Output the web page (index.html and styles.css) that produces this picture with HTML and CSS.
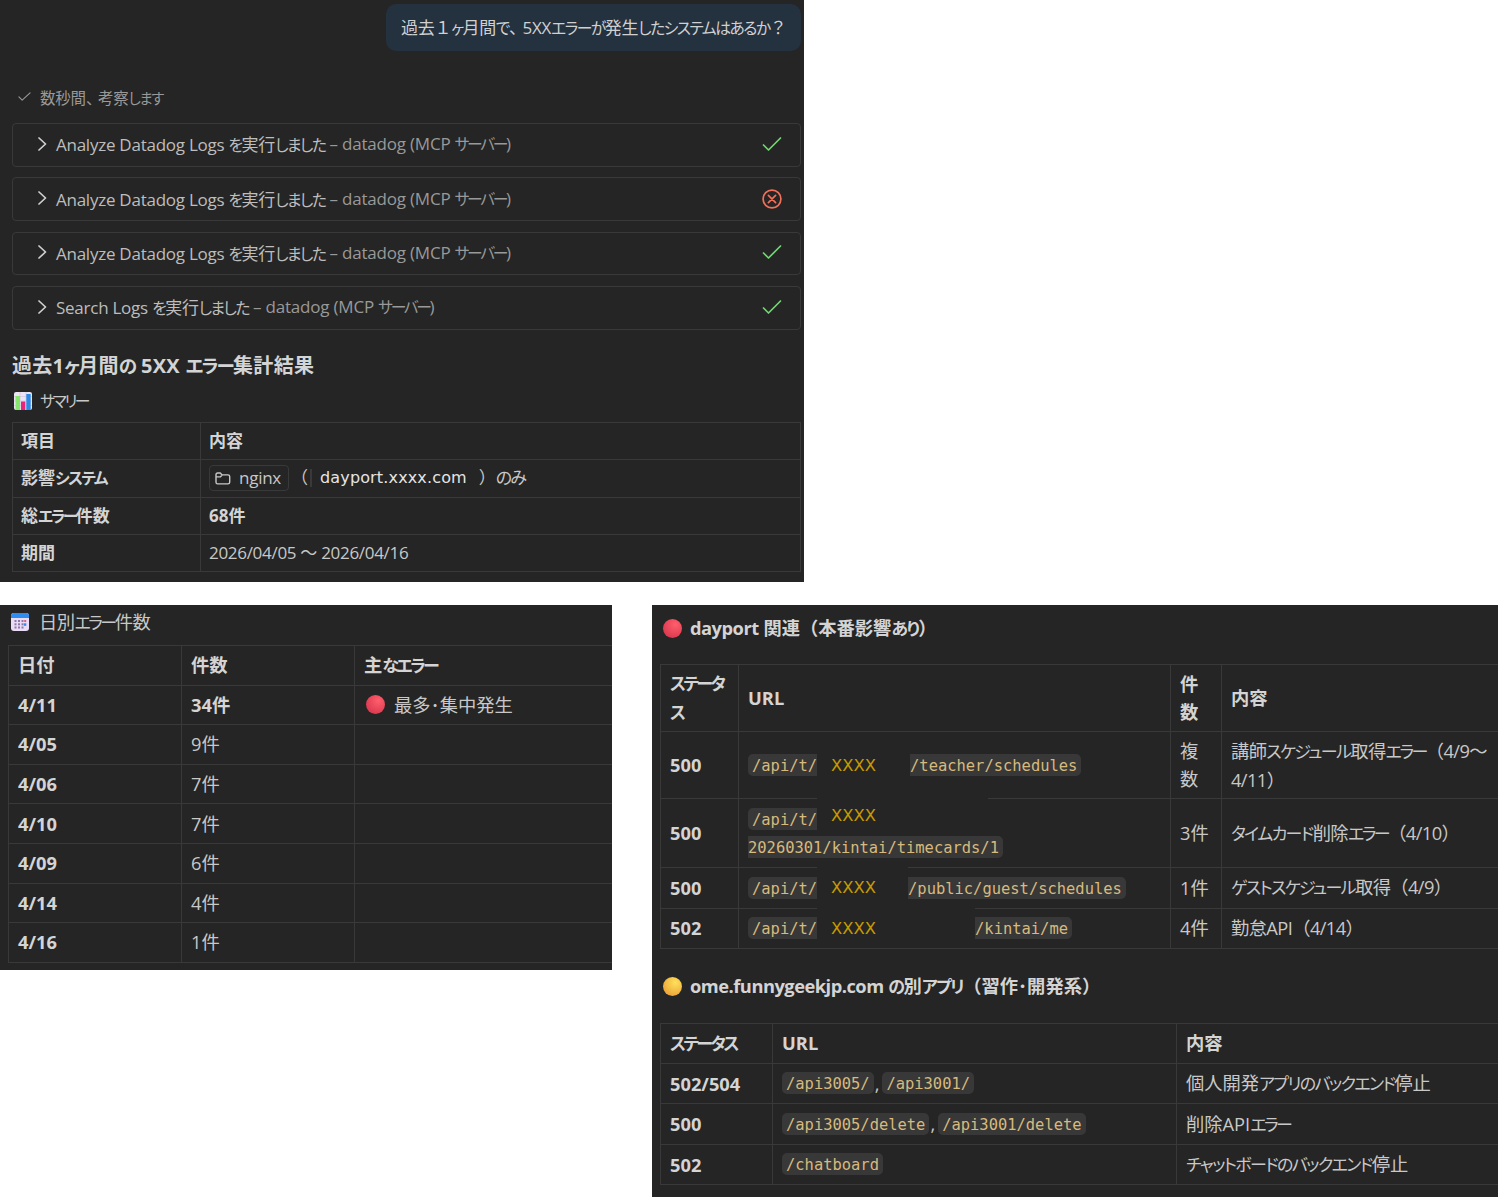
FILE: index.html
```html
<!DOCTYPE html>
<html lang="ja">
<head>
    <meta charset="UTF-8">
    <meta name="viewport" content="width=device-width, initial-scale=1.0">
    <title>過去1ヶ月間の 5XX エラー集計結果</title>
    <link rel="stylesheet" href="styles.css">
</head>
<body>
    <section class="panel chat">
        <div class="question">過去１<span class="k">ヶ</span>月間<span class="k">で</span><span class="touten">、</span>5XX<span class="k">エラーが</span>発生<span class="k">したシステムはあるか</span>？</div>

        <div class="thinking">
            <svg class="think-check" viewBox="0 0 14 11"><path d="M1 6l3.5 3.5L13 1.5"/></svg>
            <span>数秒間<span class="touten">、</span>考察<span class="k">します</span></span>
        </div>

        <div class="tools">
            <div class="tool">
                <svg class="chevron" viewBox="0 0 9 14"><path d="M1 1l6.5 6L1 13"/></svg>
                <span class="tool-name">Analyze Datadog Logs <span class="k">を</span>実行<span class="k">しました</span></span>
                <span class="tool-server">– datadog (MCP <span class="k tight">サーバー</span>)</span>
                <svg class="state ok" viewBox="0 0 20 20"><path d="M1.5 11l5 5L18.5 4"/></svg>
            </div>
            <div class="tool">
                <svg class="chevron" viewBox="0 0 9 14"><path d="M1 1l6.5 6L1 13"/></svg>
                <span class="tool-name">Analyze Datadog Logs <span class="k">を</span>実行<span class="k">しました</span></span>
                <span class="tool-server">– datadog (MCP <span class="k tight">サーバー</span>)</span>
                <svg class="state fail" viewBox="0 0 20 20"><circle cx="10" cy="10" r="8.9"/><path d="M6.4 6.4l7.2 7.2M13.6 6.4l-7.2 7.2"/></svg>
            </div>
            <div class="tool">
                <svg class="chevron" viewBox="0 0 9 14"><path d="M1 1l6.5 6L1 13"/></svg>
                <span class="tool-name">Analyze Datadog Logs <span class="k">を</span>実行<span class="k">しました</span></span>
                <span class="tool-server">– datadog (MCP <span class="k tight">サーバー</span>)</span>
                <svg class="state ok" viewBox="0 0 20 20"><path d="M1.5 11l5 5L18.5 4"/></svg>
            </div>
            <div class="tool">
                <svg class="chevron" viewBox="0 0 9 14"><path d="M1 1l6.5 6L1 13"/></svg>
                <span class="tool-name">Search Logs <span class="k">を</span>実行<span class="k">しました</span></span>
                <span class="tool-server">– datadog (MCP <span class="k tight">サーバー</span>)</span>
                <svg class="state ok" viewBox="0 0 20 20"><path d="M1.5 11l5 5L18.5 4"/></svg>
            </div>
        </div>

        <h1>過去1<span class="k">ヶ</span>月間<span class="k">の</span> 5XX <span class="k">エラー</span>集計結果</h1>
        <p class="label">
            <svg class="emoji" viewBox="0 0 18 18">
                <rect width="18" height="18" rx="2" fill="#ece4f2"/>
                <path d="M0 4.5h18M0 9h18M0 13.5h18M6 0v18M12 0v18" stroke="#cfc3da" stroke-width=".6"/>
                <rect x="1.5" y="4" width="4.5" height="14" fill="#86e56c"/>
                <rect x="7" y="9.5" width="4.3" height="8.5" fill="#e5267a"/>
                <rect x="12.3" y="2" width="4.4" height="16" fill="#2b8ae8"/>
            </svg>
            <span class="k tight">サマリー</span>
        </p>

        <table class="summary">
            <tr><th class="col-item">項目</th><th>内容</th></tr>
            <tr class="tall">
                <th>影響<span class="k">システム</span></th>
                <td>
                    <div class="system">
                        <span class="chip"><svg class="folder" viewBox="0 0 16 13"><path d="M1 10.2V2.8C1 1.8 1.6 1 2.7 1h2.6l1.8 1.9h5.8c1.1 0 1.8.7 1.8 1.7v5.6c0 1-.7 1.7-1.8 1.7H2.7C1.6 11.9 1 11.2 1 10.2zM1 4.9h4.3l1.8-1.9"/></svg>nginx</span>
                        <span class="open">（</span><span class="host">dayport.xxxx.com</span><span class="close">）</span><span class="only">のみ</span>
                    </div>
                </td>
            </tr>
            <tr><th>総<span class="k tight">エラー</span>件数</th><th>68件</th></tr>
            <tr><th>期間</th><td class="period">2026/04/05 ～ 2026/04/16</td></tr>
        </table>
    </section>

    <div class="lower">
        <section class="panel daily">
            <p class="label">
                <svg class="emoji" viewBox="0 0 18 18">
                    <rect width="18" height="18" rx="3" fill="#eadcf6"/>
                    <path d="M0 5V3a3 3 0 0 1 3-3h12a3 3 0 0 1 3 3v2z" fill="#2f8cf0"/>
                    <g fill="#8d7aa5">
                        <rect x="3.5" y="7" width="2" height="2"/><rect x="7" y="7" width="2" height="2"/><rect x="10.5" y="7" width="2" height="2"/>
                        <rect x="3.5" y="10.3" width="2" height="2"/><rect x="7" y="10.3" width="2" height="2"/><rect x="10.5" y="10.3" width="2" height="2"/>
                        <rect x="3.5" y="13.5" width="2" height="2"/><rect x="7" y="13.5" width="2" height="2"/><rect x="10.5" y="13.5" width="2" height="2"/>
                    </g>
                    <rect x="13.2" y="7" width="2" height="2" fill="#e0607a"/>
                    <rect x="12.8" y="10.3" width="2.5" height="2.5" fill="#2f8cf0"/>
                </svg>
                <span>日別<span class="k tight">エラー</span>件数</span>
            </p>
            <table>
                <tr><th class="col-date">日付</th><th class="col-num">件数</th><th>主<span class="k tight">なエラー</span></th></tr>
                <tr><th>4/11</th><th>34件</th><td><span class="note"><i class="dot red"></i>最多･集中発生</span></td></tr>
                <tr><th>4/05</th><td>9件</td><td></td></tr>
                <tr><th>4/06</th><td>7件</td><td></td></tr>
                <tr><th>4/10</th><td>7件</td><td></td></tr>
                <tr><th>4/09</th><td>6件</td><td></td></tr>
                <tr><th>4/14</th><td>4件</td><td></td></tr>
                <tr><th>4/16</th><td>1件</td><td></td></tr>
            </table>
        </section>

        <section class="panel detail">
            <h2><i class="dot red"></i><span><span class="latin">dayport</span> 関連（本番影響<span class="k">あり</span>）</span></h2>
            <table class="dayport">
                <tr class="two"><th class="col-status"><span class="k tight">ステータ<br>ス</span></th><th class="col-url">URL</th><th class="col-count">件<br>数</th><th>内容</th></tr>
                <tr class="two">
                    <th>500</th>
                    <td><div class="path"><code class="cut-right">/api/t/</code><span class="mask m1">XXXX</span><code class="cut-left">/teacher/schedules</code></div></td>
                    <td>複<br>数</td>
                    <td>講師<span class="k">スケジュール</span>取得<span class="k tight">エラー</span>（4/9～<br>4/11）</td>
                </tr>
                <tr class="two-code">
                    <th>500</th>
                    <td>
                        <div class="path"><code class="cut-right">/api/t/</code><span class="mask m2">XXXX</span></div>
                        <div class="path"><code class="cut-left">20260301/kintai/timecards/1</code></div>
                    </td>
                    <td>3件</td>
                    <td><span class="k">タイムカード</span>削除<span class="k tight">エラー</span>（4/10）</td>
                </tr>
                <tr>
                    <th>500</th>
                    <td><div class="path"><code class="cut-right">/api/t/</code><span class="mask m3">XXXX</span><code class="cut-left">/public/guest/schedules</code></div></td>
                    <td>1件</td>
                    <td><span class="k">ゲストスケジュール</span>取得（4/9）</td>
                </tr>
                <tr>
                    <th>502</th>
                    <td><div class="path"><code class="cut-right">/api/t/</code><span class="mask m4">XXXX</span><code class="cut-left">/kintai/me</code></div></td>
                    <td>4件</td>
                    <td>勤怠API（4/14）</td>
                </tr>
            </table>

            <h2><i class="dot yellow"></i><span><span class="latin">ome.funnygeekjp.com</span> <span class="k">の</span>別<span class="k">アプリ</span>（習作･開発系）</span></h2>
            <table class="apps">
                <tr class="head"><th class="col-status"><span class="k tight">ステータス</span></th><th class="col-url">URL</th><th>内容</th></tr>
                <tr><th>502/504</th><td><div class="path"><code>/api3005/</code><span class="comma">,</span><code>/api3001/</code></div></td><td>個人開発<span class="k">アプリのバックエンド</span>停止</td></tr>
                <tr><th>500</th><td><div class="path"><code>/api3005/delete</code><span class="comma">,</span><code>/api3001/delete</code></div></td><td>削除API<span class="k tight">エラー</span></td></tr>
                <tr><th>502</th><td><div class="path"><code>/chatboard</code></div></td><td><span class="k">チャットボードのバックエンド</span>停止</td></tr>
            </table>
        </section>
    </div>
</body>
</html>
```
FILE: styles.css
```css
* {
    box-sizing: border-box;
}
body {
    margin: 0;
    background: #fff;
    color: #c8c8c8;
    font-family: "Open Sans", "Noto Sans CJK JP", sans-serif;
}
h1, h2, p {
    margin: 0;
}
svg {
    display: block;
    flex: none;
    fill: none;
    stroke-linecap: round;
    stroke-linejoin: round;
}
/* kana are set narrower than kanji */
.k {
    font-size: 0.93em;
    letter-spacing: -0.095em;
    font-feature-settings: "palt";
}
.k.tight {
    letter-spacing: -0.15em;
}
.touten {
    letter-spacing: -3.5px;
}
.panel {
    background: #252525;
    overflow: hidden;
}

/* tables */
table {
    border-collapse: collapse;
    table-layout: fixed;
}
th, td {
    border: 1px solid #393939;
    padding: 0 9px;
    text-align: left;
    white-space: nowrap;
    line-height: 28px;
}
th {
    color: #d4d4d4;
    font-weight: bold;
}

/* chat panel */
.chat {
    width: 804px;
    height: 582px;
    padding: 4px 3px 0 12px;
    font-size: 17px;
}
.question {
    width: 415px;
    height: 47px;
    margin-left: auto;
    padding-left: 15px;
    border-radius: 10px;
    background: #24313f;
    line-height: 47px;
    letter-spacing: -0.3px;
    white-space: nowrap;
    color: #d0d0d0;
}
.thinking {
    display: flex;
    align-items: center;
    gap: 9px;
    height: 30px;
    margin-top: 31px;
    padding-left: 6px;
    font-size: 15.5px;
    letter-spacing: -0.2px;
    color: #999;
}
.think-check {
    width: 13px;
    height: 11px;
    margin-bottom: 2px;
    stroke: #999;
    stroke-width: 1.2;
}
.tools {
    display: flex;
    flex-direction: column;
    gap: 10.6px;
    margin-top: 11px;
}
.tool {
    display: flex;
    align-items: center;
    height: 43.7px;
    padding: 0 18px 2px 25px;
    border: 1px solid #393939;
    border-radius: 4px;
    white-space: nowrap;
}
.chevron {
    width: 9px;
    height: 14px;
    margin-right: 9px;
    stroke: #d0d0d0;
    stroke-width: 1.7;
}
.tool-name {
    letter-spacing: -0.25px;
    color: #bdbdbd;
}
.tool-server {
    margin-left: 4px;
    letter-spacing: -0.2px;
    color: #999;
}
.state {
    width: 20px;
    height: 20px;
    margin-left: auto;
    stroke-width: 1.7;
}
.ok {
    stroke: #72d672;
}
.fail {
    stroke: #f2705a;
    transform: translateY(1px);
}
h1 {
    height: 40px;
    margin-top: 16px;
    font-size: 20px;
    line-height: 40px;
    letter-spacing: 0.3px;
    color: #d4d4d4;
}
.label {
    display: flex;
    align-items: center;
    gap: 8px;
}
.emoji {
    width: 18px;
    height: 18px;
}
.chat .label {
    height: 30px;
    padding: 0 0 1px 2px;
}
.chat .emoji {
    margin-top: 2px;
}
.summary {
    width: 789px;
    margin-top: 6px;
}
.summary th, .summary td {
    height: 37px;
    padding: 0 8px;
}
.summary .tall th, .summary .tall td {
    height: 38px;
}
.summary .period {
    letter-spacing: -0.3px;
}
.col-item {
    width: 188px;
}
.system {
    display: flex;
    align-items: center;
}
.chip {
    display: flex;
    align-items: center;
    gap: 8px;
    width: 80px;
    height: 26px;
    padding-left: 5px;
    border: 1px solid #393939;
    border-radius: 4px;
    letter-spacing: -0.26px;
}
.folder {
    width: 16px;
    height: 13px;
    stroke: #c8c8c8;
    stroke-width: 1.4;
}
.open {
    width: 19px;
    margin-left: 2px;
}
.host {
    padding-left: 8px;
    border-left: 2px solid #393939;
    font-family: "DejaVu Sans", sans-serif;
    font-size: 16px;
    line-height: 18px;
    letter-spacing: 0.15px;
    color: #e4e4e4;
}
.close {
    width: 17px;
    margin-left: 12px;
}
.only {
    letter-spacing: -2px;
    font-feature-settings: "palt";
}

/* lower row */
.lower {
    display: flex;
    justify-content: space-between;
    align-items: flex-start;
    margin-top: 23px;
}
.daily, .detail {
    font-size: 18.3px;
}
.daily {
    width: 612px;
    height: 365px;
    padding-left: 8px;
}
.daily .label {
    height: 34px;
    padding: 0 0 2px 3px;
    gap: 10px;
    letter-spacing: -0.5px;
}
.daily .emoji {
    margin-top: 2px;
}
.daily table {
    width: 620px;
    margin-top: 6px;
}
.daily tr {
    height: 39.6px;
}
.col-date, .col-num {
    width: 173px;
}
.note {
    display: flex;
    align-items: center;
    gap: 9px;
    padding-left: 2px;
}
.dot {
    flex: none;
    width: 19px;
    height: 19px;
    border-radius: 50%;
}
.red {
    background: radial-gradient(circle at 65% 30%, #ff5e6c, #dc3a50 75%);
}
.yellow {
    background: radial-gradient(circle at 65% 30%, #ffe05a, #eaa338 80%);
}
.detail {
    width: 846px;
    height: 592px;
    padding-left: 8px;
}
h2 {
    display: flex;
    align-items: center;
    gap: 8px;
    height: 46px;
    padding: 0 0 2px 3px;
    font-size: 18.3px;
    color: #d4d4d4;
    white-space: nowrap;
}
h2 .dot {
    margin-top: 2px;
}
.latin {
    letter-spacing: -0.5px;
}
.detail table {
    width: 860px;
}
.detail td, .detail th {
    line-height: 27.6px;
}
.dayport td:last-child {
    letter-spacing: -0.6px;
}
.dayport {
    margin: 13px 0 14px;
}
.dayport tr {
    height: 40.5px;
}
.dayport .two {
    height: 67px;
}
.dayport .two-code {
    height: 69px;
}
.dayport .col-status {
    width: 78px;
}
.dayport .col-url {
    width: 432px;
}
.col-count {
    width: 51px;
}
.apps {
    margin-top: 14px;
}
.apps tr {
    height: 40.6px;
}
.apps .head {
    height: 39.5px;
}
.apps .col-status {
    width: 112px;
}
.apps .col-url {
    width: 404px;
}
code {
    height: 22px;
    padding: 0 4px;
    border-radius: 5px;
    background: #383838;
    color: #d7ba7d;
    font: 15.45px/24px "DejaVu Sans Mono", monospace;
}
.comma {
    margin: 0 3px 0 1px;
}
.path {
    display: flex;
    align-items: center;
    height: 28px;
}
.cut-right {
    padding-right: 0;
    border-radius: 5px 0 0 5px;
}
.cut-left {
    padding-left: 0;
    border-radius: 0 5px 5px 0;
}
/* hidden part of a path, covers the row line above it */
.mask {
    align-self: flex-end;
    height: 35px;
    padding-left: 14px;
    background: #252525;
    font: 16.4px/41px "DejaVu Sans", sans-serif;
    color: #c79a00;
}
.m1 {
    width: 93px;
    align-self: center;
    line-height: 35px;
}
.m2 {
    width: 171px;
    line-height: 35px;
}
.m3 {
    width: 91px;
}
.m4 {
    width: 158px;
    line-height: 43px;
}
```
